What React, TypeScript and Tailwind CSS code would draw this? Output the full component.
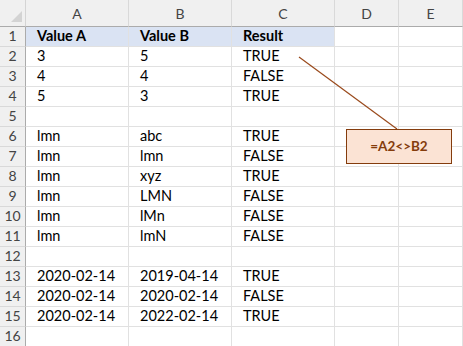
import React from "react";

const rows: string[][] = [
  ["Value A", "Value B", "Result"],
  ["3", "5", "TRUE"],
  ["4", "4", "FALSE"],
  ["5", "3", "TRUE"],
  ["", "", ""],
  ["lmn", "abc", "TRUE"],
  ["lmn", "lmn", "FALSE"],
  ["lmn", "xyz", "TRUE"],
  ["lmn", "LMN", "FALSE"],
  ["lmn", "lMn", "FALSE"],
  ["lmn", "lmN", "FALSE"],
  ["", "", ""],
  ["2020-02-14", "2019-04-14", "TRUE"],
  ["2020-02-14", "2020-02-14", "FALSE"],
  ["2020-02-14", "2022-02-14", "TRUE"],
  ["", "", ""],
];

export default function App() {
  return (
    <div
      className="relative w-[463px] h-[346px] overflow-hidden bg-white text-black"
      style={{ fontFamily: "Lato, 'Open Sans', sans-serif" }}
    >
      <div className="grid grid-cols-[26px_103px_103px_103px_64px_64px] grid-rows-[27px_repeat(16,20px)]">
        <div className="relative bg-[#f0f0f0] border-r border-b border-r-[#d4d4d4] border-b-[#ababab]">
          <div className="absolute right-[3px] bottom-[4px] w-0 h-0 border-l-[11px] border-l-transparent border-b-[11px] border-b-[#d3d3d3]" />
        </div>
        {["A", "B", "C", "D", "E"].map((c, i) => (
          <div
            key={c}
            className={`flex items-center justify-center bg-[#f0f0f0] border-b border-b-[#ababab] border-r border-r-[#d9d9d9] text-[14px] text-[#444] ${i === 4 ? "relative" : ""}`}
          >
            {c}
          </div>
        ))}
        {rows.map((r, ri) => (
          <React.Fragment key={ri}>
            <div className="flex items-end justify-center pb-[1px] bg-[#f0f0f0] border-r border-r-[#ababab] border-b border-b-[#d9d9d9] text-[14px] text-[#444] leading-[18px]">
              {ri + 1}
            </div>
            {r.map((v, ci) => (
              <div
                key={ci}
                className={`flex items-end pl-[11px] pb-[1px] border-r border-b border-[#e1e1e1] text-[14.5px] leading-[18px] whitespace-nowrap ${ri === 0 ? "bg-[#dae3f3] font-bold" : ""}`}
              >
                {v}
              </div>
            ))}
            <div className="border-r border-b border-[#e1e1e1]" />
            <div className="border-r border-b border-[#e1e1e1]" />
          </React.Fragment>
        ))}
      </div>
      <svg className="absolute left-0 top-0" width="463" height="346">
        <line x1="299" y1="57" x2="397" y2="129" stroke="#9a4a1c" strokeWidth="1.2" />
      </svg>
      <div className="absolute left-[346px] top-[129px] w-[106px] h-[35px] flex items-center justify-center bg-[#fbe3d4] border border-[#843c0c] text-[#843c0c] font-bold text-[13.5px]">
        =A2&lt;&gt;B2
      </div>
    </div>
  );
}
